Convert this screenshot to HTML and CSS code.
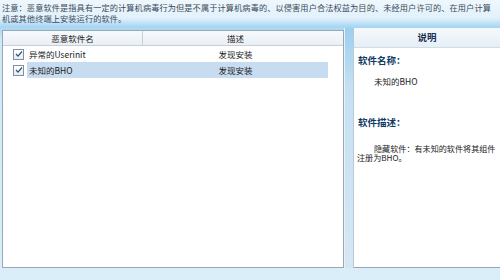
FILE: index.html
```html
<!DOCTYPE html>
<html>
  <head>
    <meta charset="utf-8" />
    <link rel="stylesheet" href="styles.css">
  </head>
  <body>
    <p class="notice">注意：恶意软件是指具有一定的计算机病毒行为但是不属于计算机病毒的、以侵害用户合法权益为目的、未经用户许可的、在用户计算<br>机或其他终端上安装运行的软件。</p>

    <div class="main">
      <div class="list-panel">
        <div class="list-head">
          <div class="col-name">恶意软件名</div>
          <div class="col-desc">描述</div>
        </div>
        <div class="row">
          <span class="check"><svg width="8" height="8" viewBox="0 0 8 8"><path d="M1 4 L3 6.2 L7 1.5" fill="none" stroke="#33506e" stroke-width="1.2"/></svg></span>
          <span class="cell-name">异常的Userinit</span>
          <span class="cell-desc">发现安装</span>
        </div>
        <div class="row selected">
          <span class="check"><svg width="8" height="8" viewBox="0 0 8 8"><path d="M1 4 L3 6.2 L7 1.5" fill="none" stroke="#33506e" stroke-width="1.2"/></svg></span>
          <span class="cell-name">未知的BHO</span>
          <span class="cell-desc">发现安装</span>
        </div>
      </div>

      <div class="splitter"></div>

      <div class="info-panel">
        <div class="info-head">说明</div>
        <div class="info-body">
          <h4>软件名称：</h4>
          <p class="soft-name">未知的BHO</p>
          <h4 class="desc-title">软件描述：</h4>
          <p class="soft-desc">隐藏软件：有未知的软件将其组件注册为BHO。</p>
        </div>
      </div>
    </div>
  </body>
</html>
```

FILE: styles.css
```css
html,
body {
  margin: 0;
  height: 280px;
  overflow: hidden;
  font-family: "Noto Sans CJK SC", sans-serif;
}
body {
  background: linear-gradient(#eef7fd 0, #e2f1fb 18px, #a6d6f2 27px, #cfe8f6 40px, #d9eef8 100%);
}
.notice {
  margin: 0;
  height: 28px;
  padding: 2px 0 0 2px;
  box-sizing: border-box;
  font-size: 8.2px;
  line-height: 10.5px;
  letter-spacing: 0.1px;
  color: #3c4b5a;
  white-space: nowrap;
}
.main {
  display: flex;
  height: 240px;
}
.list-panel {
  width: 342px;
  margin: 2px 0 0 2px;
  border: 1px solid #9aa6b2;
  background: #fff;
  box-sizing: border-box;
}
.list-head {
  display: flex;
  height: 14px;
  background: linear-gradient(#f7fafd, #e9eff5);
  border-bottom: 1px solid #c6d0da;
  font-size: 8.5px;
  line-height: 14px;
  color: #222;
}
.col-name {
  width: 139px;
  text-align: center;
  border-right: 1px solid #c6d0da;
}
.col-desc {
  width: 185px;
  text-align: center;
}
.row {
  display: flex;
  align-items: center;
  height: 16px;
  font-size: 8.5px;
  color: #1a1a1a;
}
.check {
  display: flex;
  align-items: center;
  justify-content: center;
  width: 9px;
  height: 9px;
  margin: 0 3px 0 10px;
  border: 1px solid #7f90a2;
  background: linear-gradient(#ffffff, #e4ecf4);
}
.cell-name {
  width: 114px;
  padding-left: 2px;
  line-height: 16px;
}
.cell-desc {
  width: 185px;
  text-align: center;
  line-height: 16px;
}
.row.selected .cell-name,
.row.selected .cell-desc {
  background: #c8dcf1;
}
.splitter {
  width: 8px;
  border-left: 1px solid #e6f2fa;
  background: linear-gradient(#9ccff0, #c6e0f2 25%, #d6e7f4);
}
.info-panel {
  flex: 1;
  display: flex;
  flex-direction: column;
  border-left: 1px solid #b6cadc;
  border-bottom: 1px solid #9aa6b2;
  background: #fff;
}
.info-head {
  height: 19px;
  line-height: 19px;
  text-align: center;
  font-size: 9.5px;
  font-weight: bold;
  color: #1b3350;
  background: linear-gradient(#f5f9fc, #e6eef6);
  border-bottom: 1px solid #d2dce6;
}
.info-body {
  padding: 0 1px 0 3px;
}
h4 {
  margin: 6px 0 0 1px;
  font-size: 9.5px;
  line-height: 12px;
  color: #0f3a63;
}
.soft-name {
  margin: 10px 0 0 17px;
  font-size: 8.5px;
  line-height: 11px;
  color: #222;
}
.desc-title {
  margin-top: 29px;
}
.soft-desc {
  margin: 16px 0 0;
  font-size: 8.1px;
  line-height: 9px;
  text-indent: 17px;
  color: #222;
}
```
